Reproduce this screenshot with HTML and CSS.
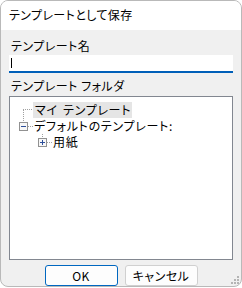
FILE: index.html
```html
<!DOCTYPE html>
<html lang="ja">
<head>
    <meta charset="UTF-8">
    <title>テンプレートとして保存</title>
    <link rel="stylesheet" href="styles.css">
</head>
<body>
    <div class="window">
        <div class="titlebar">テンプレートとして保存</div>
        <div class="content">
            <label class="label name-label">テンプレート名</label>
            <div class="textbox"><span class="caret"></span></div>
            <label class="label folder-label">テンプレート フォルダ</label>
            <div class="tree">
                <div class="row">
                    <svg class="lines" width="23" height="16">
                        <line x1="13.5" y1="8" x2="13.5" y2="16" class="dot" />
                        <line x1="13" y1="7.5" x2="23" y2="7.5" class="dot" />
                    </svg>
                    <span class="item selected">マイ テンプレート</span>
                </div>
                <div class="row">
                    <svg class="lines" width="23" height="16">
                        <line x1="13.5" y1="0" x2="13.5" y2="4" class="dot" />
                        <rect x="9.5" y="4.5" width="8" height="8" class="box" />
                        <line x1="11" y1="8.5" x2="16" y2="8.5" class="sign" />
                        <line x1="18" y1="8.5" x2="23" y2="8.5" class="dot" />
                    </svg>
                    <span class="item">デフォルトのテンプレート:</span>
                </div>
                <div class="row">
                    <svg class="lines" width="42" height="16">
                        <line x1="32.5" y1="0" x2="32.5" y2="4" class="dot" />
                        <rect x="28.5" y="4.5" width="8" height="8" class="box" />
                        <line x1="30" y1="8.5" x2="35" y2="8.5" class="sign" />
                        <line x1="32.5" y1="6" x2="32.5" y2="11" class="sign" />
                        <line x1="37" y1="8.5" x2="42" y2="8.5" class="dot" />
                    </svg>
                    <span class="item">用紙</span>
                </div>
            </div>
            <div class="buttons">
                <button class="btn default">OK</button>
                <button class="btn">キャンセル</button>
            </div>
        </div>
        <svg class="grip" width="9" height="9">
            <rect x="6" y="0" width="2" height="2" />
            <rect x="3" y="3" width="2" height="2" />
            <rect x="6" y="3" width="2" height="2" />
            <rect x="0" y="6" width="2" height="2" />
            <rect x="3" y="6" width="2" height="2" />
            <rect x="6" y="6" width="2" height="2" />
        </svg>
    </div>
</body>
</html>
```
FILE: styles.css
```css
* {
    margin: 0;
    padding: 0;
    box-sizing: border-box;
}

body {
    font-family: "Noto Sans CJK JP", "Noto Sans", sans-serif;
    font-size: 12px;
    font-feature-settings: "palt";
    letter-spacing: 0.5px;
    color: #000;
    background-color: #fff;
}

.window {
    position: relative;
    width: 242px;
    height: 287px;
    border: 1px solid #b9b9b9;
    border-radius: 8px;
    background-color: #f0f0f0;
    overflow: hidden;
}

.titlebar {
    height: 29px;
    padding: 6px 0 0 8px;
    line-height: 16px;
    letter-spacing: 0.4px;
    background-color: #fff;
}

.content {
    padding: 0 8px;
}

.label {
    display: block;
    line-height: 16px;
    padding-left: 2px;
}

.name-label {
    margin-top: 8px;
}

.textbox {
    height: 18px;
    margin-top: 1px;
    background-color: #fff;
    border-bottom: 2px solid #005fb8;
    padding: 3px 0 0 2px;
}

.caret {
    display: block;
    width: 1px;
    height: 10px;
    background-color: #000;
}

.folder-label {
    margin-top: 5px;
}

.tree {
    height: 164px;
    margin-top: 2px;
    border: 1px solid #828790;
    background-color: #fff;
    padding-top: 5px;
}

.row {
    display: flex;
    height: 16px;
    line-height: 16px;
    letter-spacing: 0.7px;
}

.lines {
    flex: none;
}

.dot {
    stroke: #a0a0a0;
    stroke-width: 1;
    stroke-dasharray: 1 1;
}

.box {
    fill: #f7f7f7;
    stroke: #919191;
    stroke-width: 1;
}

.sign {
    stroke: #2d4f9a;
    stroke-width: 1;
}

.item {
    padding: 0 1px 0 1px;
}

.selected {
    background-color: #e5e5e5;
    padding-left: 2px;
    word-spacing: 2px;
}

.buttons {
    display: flex;
    justify-content: center;
    gap: 7px;
    margin-top: 5px;
}

.btn {
    width: 73px;
    height: 21px;
    border: 1px solid #d0d0d0;
    border-radius: 3px;
    background-color: #fdfdfd;
    font-family: inherit;
    font-size: 12px;
    font-feature-settings: "palt";
    letter-spacing: 0.5px;
}

.default {
    border-color: #0067c0;
}

.grip {
    position: absolute;
    right: 1px;
    bottom: 1px;
    fill: #b4b4b4;
}
```
